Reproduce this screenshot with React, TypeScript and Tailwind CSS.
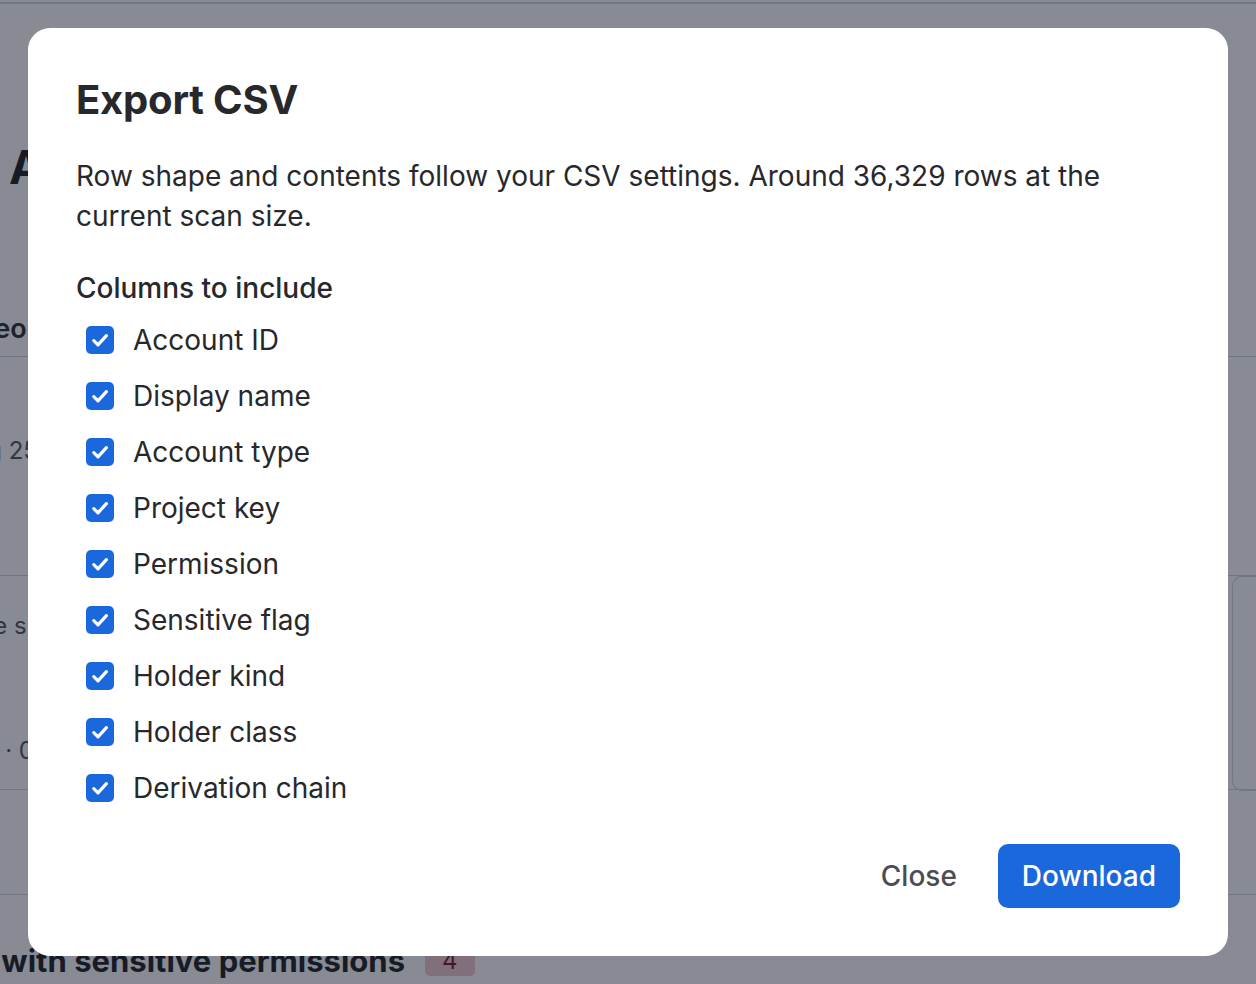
import React from 'react';

const columns = [
  'Account ID',
  'Display name',
  'Account type',
  'Project key',
  'Permission',
  'Sensitive flag',
  'Holder kind',
  'Holder class',
  'Derivation chain',
];

function Check() {
  return (
    <span className="w-7 h-7 rounded-[5px] bg-[#1b67dc] flex items-center justify-center shrink-0">
      <svg width="28" height="28" viewBox="0 0 28 28" fill="none" stroke="white" strokeWidth="3.2" strokeLinecap="round" strokeLinejoin="round">
        <path d="M7.8 14.6l4.2 4.2L20.4 9.6" />
      </svg>
    </span>
  );
}

export default function App() {
  return (
    <div className="relative w-[1256px] h-[984px] overflow-hidden bg-white font-['Inter','Noto_Sans',sans-serif]">
      {/* page behind the dialog */}
      <div className="h-[2px]" />
      <div className="border-t-2 border-gray-300" />
      <div className="h-[136px]" />
      <h1 className="pl-[9px] text-[46px] font-bold text-[#1d1f24] leading-[54px]">Access review</h1>
      <div className="h-[115px]" />
      <div className="-ml-[23px] h-[40px] leading-[40px] text-[27px] font-semibold text-[#2a2c31]">People</div>
      <div className="h-[7px]" />
      <div className="border-t border-gray-300" />
      <div className="h-[218px] flex flex-col">
        <div className="mt-[76px] -ml-[96px] h-[36px] leading-[36px] text-[24px] text-[#4f545d]">Showing 25 of 412</div>
      </div>
      <div className="border-t border-gray-300" />
      <div className="flex h-[213px]">
        <div className="text-[24px] text-[#4f545d]">
          <div className="mt-[32px] -ml-[64px] h-[36px] leading-[36px]">on the site</div>
          <div className="mt-[89px] -ml-[26px] h-[36px] leading-[36px]">12 · 0 · 3</div>
        </div>
        <div className="ml-auto w-[24px] h-[215px] border border-r-0 border-gray-300 rounded-l-[10px]" />
      </div>
      <div className="border-t border-gray-300" />
      <div className="h-[104px]" />
      <div className="border-t border-gray-300" />
      <div className="mt-[48px] flex items-center gap-[20px] -ml-[151px] whitespace-nowrap">
        <span className="text-[31px] font-bold text-[#1d1f24] leading-[36px]">Accounts with sensitive permissions</span>
        <span className="px-[17px] h-[30px] leading-[30px] rounded-[5px] bg-[#f0c9cf] text-[24px] text-[#7a1824]">4</span>
      </div>

      {/* overlay */}
      <div className="absolute inset-0 bg-[#111827]/50" />

      {/* dialog */}
      <div className="absolute left-[28px] top-[28px] w-[1200px] h-[928px] bg-white rounded-[22px] px-[48px] pt-[44px] pb-[48px] flex flex-col">
        <h2 className="text-[40px] font-bold text-[#27282c] leading-[56px] tracking-[-0.2px]">Export CSV</h2>
        <p className="mt-[28px] text-[28px] leading-[40px] text-[#27282c]">
          Row shape and contents follow your CSV settings. Around 36,329 rows at the current scan size.
        </p>
        <div className="mt-[32px] text-[28px] font-medium leading-[40px] text-[#27282c]">Columns to include</div>
        <div className="mt-[4px] flex flex-col">
          {columns.map((c) => (
            <label key={c} className="flex items-center gap-[19px] h-[56px] pl-[10px]">
              <Check />
              <span className="text-[28px] text-[#27282c]">{c}</span>
            </label>
          ))}
        </div>
        <div className="mt-auto flex justify-end items-center gap-[18px]">
          <button className="px-[23px] h-[64px] text-[28px] font-medium text-[#4b4d52]">Close</button>
          <button className="px-[24px] h-[64px] rounded-[10px] bg-[#1b67dc] text-[28px] font-medium text-white">Download</button>
        </div>
      </div>
    </div>
  );
}
